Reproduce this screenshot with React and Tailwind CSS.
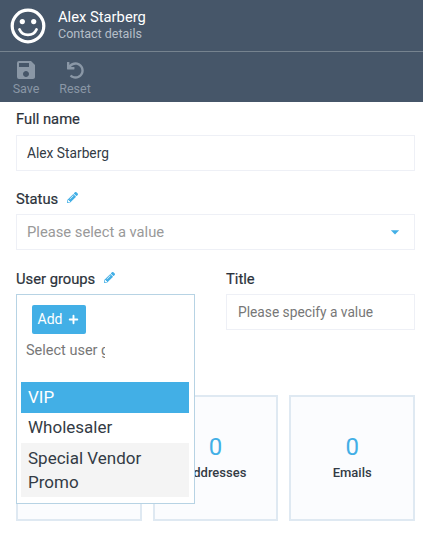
import { Plus } from "lucide-react";
import { FaPencilAlt, FaUndo } from "react-icons/fa";
import { MdSave, MdArrowDropDown } from "react-icons/md";

const cards = [
  { count: 0, label: "Phones" },
  { count: 0, label: "Addresses" },
  { count: 0, label: "Emails" },
];

function Smiley() {
  return (
    <svg width="36" height="36" viewBox="0 0 36 36" fill="none">
      <circle cx="18" cy="18" r="15.8" stroke="#fff" strokeWidth="3.2" />
      <circle cx="12.3" cy="13.6" r="2.6" fill="#fff" />
      <circle cx="23.7" cy="13.6" r="2.6" fill="#fff" />
      <path d="M9.5 21.5c1.6 3.6 4.6 5.4 8.5 5.4s6.9-1.8 8.5-5.4" stroke="#fff" strokeWidth="2.8" strokeLinecap="round" />
    </svg>
  );
}

function ToolButton({ icon, label, width }) {
  return (
    <div className={`flex flex-col items-center text-[#8a97a6] ${width}`}>
      <div className="flex h-6 items-center">{icon}</div>
      <span className="text-[12.5px] leading-[14px]">{label}</span>
    </div>
  );
}

function Label({ children, edit }) {
  return (
    <div className="flex h-4 items-center gap-[9px] text-[14.75px] leading-4 text-[#2b323b] [-webkit-text-stroke:0.2px_#2b323b]">
      {children}
      {edit && <FaPencilAlt size={11} className="-mt-[3px] text-[#42afe6]" />}
    </div>
  );
}

export default function App() {
  return (
    <div className="relative h-[534px] w-[423px] overflow-hidden bg-white font-['Roboto',sans-serif]">
      <div className="h-[102px] bg-[#465669]">
        <div className="flex h-[52px] items-center gap-[12px] border-b border-[#76838f] pl-[10px]">
          <Smiley />
          <div>
            <div className="text-[14.75px] leading-[17px] text-white">Alex Starberg</div>
            <div className="text-[12.5px] leading-[16px] text-[#b5bec8]">Contact details</div>
          </div>
        </div>
        <div className="flex pl-[2px] pt-[6px]">
          <ToolButton icon={<MdSave size={24} />} label="Save" width="w-[48px]" />
          <ToolButton icon={<FaUndo size={17} />} label="Reset" width="w-[50px]" />
        </div>
      </div>

      <div className="pl-4 pr-2 pt-[9px]">
        <Label>Full name</Label>
        <div className="mt-[8px] flex h-[36px] items-center border border-[#eef0f6] px-[10px] text-[13.75px] text-[#333b45]">
          Alex Starberg
        </div>

        <div className="mt-[20px]">
          <Label edit>Status</Label>
        </div>
        <div className="mt-[7px] flex h-[36px] items-center justify-between border border-[#eef0f6] pl-[10px] pr-[9px] text-[14.75px] text-[#999]">
          Please select a value
          <MdArrowDropDown size={20} className="text-[#42afe6]" />
        </div>

        <div className="mt-[21px] flex gap-[31px]">
          <div className="w-[179px]">
            <Label edit>User groups</Label>
          </div>
          <div className="flex-1">
            <Label>Title</Label>
            <div className="mt-[7px] flex h-[36px] items-center border border-[#eef0f6] px-[11px] text-[13.75px] text-[#777]">
              Please specify a value
            </div>
          </div>
        </div>

        <div className="mt-[65px] grid grid-cols-3 gap-[11px]">
          {cards.map((c) => (
            <div
              key={c.label}
              className="flex h-[126px] flex-col items-center justify-center border-2 border-[#dfe9f2] bg-[#fbfcfe] pb-[2px]"
            >
              <div className="text-[24px] leading-[28px] text-[#42afe6]">{c.count}</div>
              <div className="mt-[4px] text-[13px] font-medium leading-[16px] text-[#333b45]">{c.label}</div>
            </div>
          ))}
        </div>
      </div>

      <div className="absolute left-4 top-[294px] h-[210px] w-[179px] border border-[#b7d3e4] bg-white">
        <div className="ml-[15px] mt-[10px] flex h-[29px] w-[54px] items-center justify-center gap-[5px] rounded-[2px] bg-[#42afe6] text-[14px] text-white">
          Add
          <Plus size={13} strokeWidth={3.5} />
        </div>
        <div className="ml-[9px] mt-[8px] h-[18px] w-[79px] overflow-hidden whitespace-nowrap text-[14.5px] leading-[18px] text-[#777]">
          Select user groups
        </div>
        <div className="ml-1 mr-[5px] mt-[22px] text-[17px] text-[#333b45]">
          <div className="flex h-[31px] items-center bg-[#42afe6] pl-[7px] text-white">VIP</div>
          <div className="flex h-[30px] items-center pl-[7px]">Wholesaler</div>
          <div className="bg-[#f4f4f4] px-[7px] py-[3px] leading-[24px]">Special Vendor Promo</div>
        </div>
      </div>
    </div>
  );
}
